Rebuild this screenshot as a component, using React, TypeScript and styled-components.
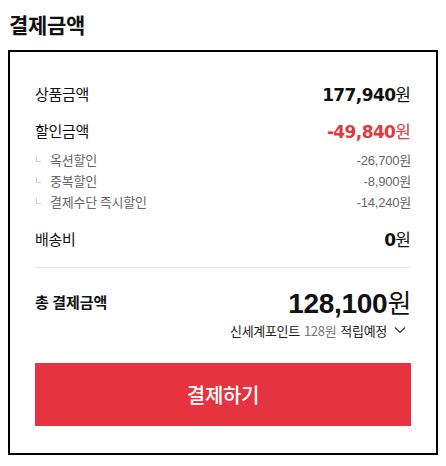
import styled, { createGlobalStyle } from 'styled-components'

const GlobalStyle = createGlobalStyle`
  html, body {
    margin: 0;
    padding: 0;
    background: #fff;
    font-family: 'Noto Sans CJK KR', sans-serif;
    color: #111;
  }
`

const Page = styled.div`
  width: 446px;
  padding: 8px 8px 0;
  box-sizing: border-box;
`

const Heading = styled.h2`
  margin: 0 0 0 1px;
  height: 42px;
  line-height: 32px;
  font-size: 21px;
  font-weight: 700;
  letter-spacing: -0.3px;
`

const Box = styled.section`
  width: 430px;
  box-sizing: border-box;
  border: 2px solid #000;
  padding: 28px 25px 27px;
  display: flex;
  flex-direction: column;
`

const Row = styled.div<{ $gap?: number }>`
  display: flex;
  justify-content: space-between;
  align-items: center;
  height: 26px;
  margin-top: ${(p) => p.$gap ?? 0}px;
`

const Label = styled.span<{ $bold?: boolean }>`
  font-size: 15px;
  font-weight: ${(p) => (p.$bold ? 700 : 400)};
  letter-spacing: ${(p) => (p.$bold ? '0' : '-0.3px')};
`

const Amount = styled.span<{ $red?: boolean }>`
  font-family: 'DejaVu Sans', 'Noto Sans CJK KR', sans-serif;
  font-size: 17px;
  font-weight: 700;
  letter-spacing: -0.6px;
  color: ${(p) => (p.$red ? '#e0393f' : '#111')};
`

const Won = styled.span`
  font-family: 'Noto Sans CJK KR', sans-serif;
  font-weight: 400;
  font-size: 17px;
  letter-spacing: 0;
`

const SubList = styled.div`
  margin: 6px 0 13px;
  display: flex;
  flex-direction: column;
`

const SubRow = styled.div`
  display: flex;
  justify-content: space-between;
  align-items: center;
  height: 21px;
  font-size: 13px;
  color: #666;
`

const SubLabel = styled.span`
  display: flex;
  align-items: center;
  letter-spacing: -0.2px;

  &::before {
    content: '';
    width: 4px;
    height: 5px;
    margin: 0 9px 2px 1px;
    border-left: 1px solid #d0d0d0;
    border-bottom: 1px solid #d0d0d0;
  }
`

const SubAmount = styled.span`
  font-family: 'Liberation Sans', 'Noto Sans CJK KR', sans-serif;
  font-size: 13px;
  letter-spacing: -0.2px;
`

const Divider = styled.hr`
  margin: 16px 0 15px;
  border: 0;
  border-top: 1px solid #e6e6e6;
`

const TotalRow = styled.div`
  display: flex;
  justify-content: space-between;
  align-items: center;
  height: 36px;
`

const TotalAmount = styled.span`
  font-family: 'Liberation Sans', 'Noto Sans CJK KR', sans-serif;
  font-size: 28px;
  font-weight: 700;
  letter-spacing: -0.3px;
`

const TotalWon = styled.span`
  font-family: 'Noto Sans CJK KR', sans-serif;
  font-weight: 400;
  font-size: 26px;
`

const Points = styled.div`
  display: flex;
  justify-content: flex-end;
  align-items: center;
  gap: 4px;
  margin-top: 2px;
  height: 18px;
  font-size: 13px;
  letter-spacing: -0.3px;
  color: #222;
`

const PointValue = styled.span`
  color: #777;
`

const Chevron = styled.svg`
  margin-left: 3px;
  margin-right: 5px;
`

const PayButton = styled.button`
  margin-top: 24px;
  height: 63px;
  border: 0;
  background: #e5343f;
  color: #fff;
  font-family: 'Noto Sans CJK KR', sans-serif;
  font-size: 20px;
  font-weight: 500;
  letter-spacing: -0.3px;
  cursor: pointer;
`

const discounts = [
  { label: '옥션할인', amount: '-26,700' },
  { label: '중복할인', amount: '-8,900' },
  { label: '결제수단 즉시할인', amount: '-14,240' },
]

export default function App() {
  return (
    <Page>
      <GlobalStyle />
      <Heading>결제금액</Heading>
      <Box>
        <Row>
          <Label>상품금액</Label>
          <Amount>
            177,940<Won>원</Won>
          </Amount>
        </Row>
        <Row $gap={11}>
          <Label>할인금액</Label>
          <Amount $red>
            -49,840<Won>원</Won>
          </Amount>
        </Row>
        <SubList>
          {discounts.map((d) => (
            <SubRow key={d.label}>
              <SubLabel>{d.label}</SubLabel>
              <SubAmount>{d.amount}원</SubAmount>
            </SubRow>
          ))}
        </SubList>
        <Row>
          <Label>배송비</Label>
          <Amount>
            0<Won>원</Won>
          </Amount>
        </Row>
        <Divider />
        <TotalRow>
          <Label $bold>총 결제금액</Label>
          <TotalAmount>
            128,100<TotalWon>원</TotalWon>
          </TotalAmount>
        </TotalRow>
        <Points>
          신세계포인트 <PointValue>128원</PointValue> 적립예정
          <Chevron width="12" height="8" viewBox="0 0 12 8">
            <path d="M1 1.5 L6 6.5 L11 1.5" fill="none" stroke="#333" strokeWidth="1.2" />
          </Chevron>
        </Points>
        <PayButton>결제하기</PayButton>
      </Box>
    </Page>
  )
}
